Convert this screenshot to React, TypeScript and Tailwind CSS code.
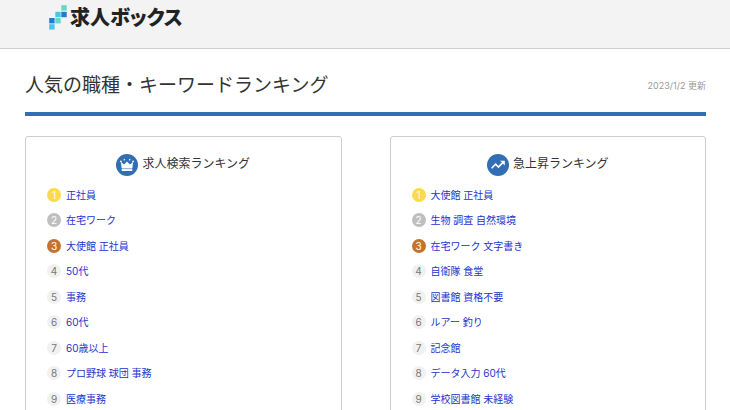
import type { ReactNode } from "react";
import clsx from "clsx";

interface RankingCardProps {
    title: string;
    icon: ReactNode;
    keywords: string[];
}

const searchRanking = [
    "正社員",
    "在宅ワーク",
    "大使館 正社員",
    "50代",
    "事務",
    "60代",
    "60歳以上",
    "プロ野球 球団 事務",
    "医療事務",
];

const risingRanking = [
    "大使館 正社員",
    "生物 調査 自然環境",
    "在宅ワーク 文字書き",
    "自衛隊 食堂",
    "図書館 資格不要",
    "ルアー 釣り",
    "記念館",
    "データ入力 60代",
    "学校図書館 未経験",
];

const badgeColors = [
    "bg-[#fdd94c] text-white",
    "bg-[#bfbfbf] text-white",
    "bg-[#c6722e] text-white",
];

function LogoMark() {
    return (
        <svg width="18" height="25" viewBox="0 0 18 25" aria-hidden="true">
            <rect x="12.3" y="0.2" width="5.4" height="5.4" fill="#63d8cb" />
            <rect x="6.3" y="6.8" width="5.4" height="5.4" fill="#4fc3e6" />
            <rect x="12.3" y="6.8" width="5.4" height="5.4" fill="#2878d2" />
            <rect x="0.2" y="13" width="5.4" height="5.4" fill="#2878d2" />
            <rect x="6.3" y="13" width="5.4" height="5.4" fill="#63d8cb" />
            <rect x="0.2" y="19.2" width="5.4" height="5.4" fill="#4fc3e6" />
        </svg>
    );
}

function CrownIcon() {
    return (
        <svg width="22" height="22" viewBox="0 0 22 22" aria-hidden="true">
            <circle cx="11" cy="11" r="11" fill="#326eb3" />
            <g fill="#fff">
                <circle cx="4.9" cy="7.4" r="0.9" />
                <circle cx="8.3" cy="5.8" r="0.8" />
                <circle cx="13.7" cy="5.8" r="0.8" />
                <circle cx="17.1" cy="7.4" r="0.9" />
                <path d="M4.9 8 8 10.4 11 7.6 14 10.4 17.1 8 16.3 14.4H5.7z" />
                <rect x="5.7" y="15.1" width="10.6" height="1.9" />
            </g>
        </svg>
    );
}

function TrendIcon() {
    return (
        <svg width="22" height="22" viewBox="0 0 22 22" aria-hidden="true">
            <circle cx="11" cy="11" r="11" fill="#326eb3" />
            <path
                d="M4.6 14.2 8.6 10.2 11.4 13 16 8.4"
                fill="none"
                stroke="#fff"
                strokeWidth="1.6"
            />
            <path d="M13.2 6.8h4.6v4.6z" fill="#fff" />
        </svg>
    );
}

function RankingCard({ title, icon, keywords }: RankingCardProps) {
    return (
        <section className="rounded-[3px] border border-[#cccccc] px-[21px] pt-[17px] pb-6">
            <h2 className="flex items-center justify-center gap-1 text-[12px] leading-5">
                <span>{icon}</span>
                <span className="pb-0.5">{title}</span>
            </h2>

            <ol className="mt-3">
                {keywords.map((keyword, index) => (
                    <li
                        key={keyword}
                        className="flex items-center gap-[5px] odd:pb-[11px] even:pb-3"
                    >
                        <span
                            className={clsx(
                                "flex size-[14px] items-center justify-center rounded-full text-[10px] leading-none",
                                badgeColors[index] ?? "bg-[#f1f1f1] text-[#777777]"
                            )}
                        >
                            {index + 1}
                        </span>
                        <a
                            href="#"
                            className="text-[10px] leading-[14px] text-[#2433cc]"
                        >
                            {keyword}
                        </a>
                    </li>
                ))}
            </ol>
        </section>
    );
}

export default function App() {
    return (
        <div className="bg-white font-[Inter,'Noto_Sans_CJK_JP',sans-serif] text-[#333333]">
            <header className="border-b border-[#cccccc] bg-[#f3f3f3] px-[49px] pt-px pb-[15px]">
                <a
                    href="#"
                    className="inline-flex h-8 items-center gap-[3px] align-top text-[20px] leading-none font-black text-[#222222] [font-feature-settings:'palt']"
                >
                    <LogoMark />
                    <span className="pt-0.5">求人ボックス</span>
                </a>
            </header>

            <main className="pr-6 pl-[25px]">
                <div className="flex items-center justify-between border-b-4 border-[#326eb3] pt-[21px] pb-2.5">
                    <h1 className="text-[19px] leading-8">
                        人気の職種・キーワードランキング
                    </h1>
                    <p className="text-[9px] leading-4 text-[#999999]">
                        2023/1/2 更新
                    </p>
                </div>

                <div className="mt-5 grid grid-cols-2 gap-12">
                    <RankingCard
                        title="求人検索ランキング"
                        icon={<CrownIcon />}
                        keywords={searchRanking}
                    />
                    <RankingCard
                        title="急上昇ランキング"
                        icon={<TrendIcon />}
                        keywords={risingRanking}
                    />
                </div>
            </main>
        </div>
    );
}
